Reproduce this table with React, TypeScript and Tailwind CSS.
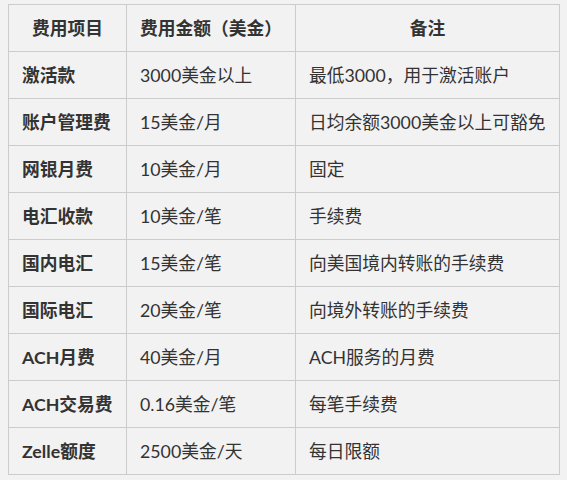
import React from 'react';

const rows = [
  ['激活款', '3000美金以上', '最低3000，用于激活账户'],
  ['账户管理费', '15美金/月', '日均余额3000美金以上可豁免'],
  ['网银月费', '10美金/月', '固定'],
  ['电汇收款', '10美金/笔', '手续费'],
  ['国内电汇', '15美金/笔', '向美国境内转账的手续费'],
  ['国际电汇', '20美金/笔', '向境外转账的手续费'],
  ['ACH月费', '40美金/月', 'ACH服务的月费'],
  ['ACH交易费', '0.16美金/笔', '每笔手续费'],
  ['Zelle额度', '2500美金/天', '每日限额'],
];

export default function App() {
  return (
    <div
      className="w-[567px] h-[480px] bg-[#f2f2f2] pt-[4px] pl-[8px] text-[#333] text-[17.75px]"
      style={{ fontFamily: 'Lato, "Noto Sans CJK SC", sans-serif' }}
    >
      <table className="border-collapse table-fixed w-[552px]">
        <colgroup>
          <col className="w-[118px]" />
          <col className="w-[169px]" />
          <col />
        </colgroup>
        <thead>
          <tr className="h-[47px]">
            <th className="border border-[#cccccc] px-[13px] text-center font-bold">费用项目</th>
            <th className="border border-[#cccccc] px-[13px] text-center font-bold">费用金额（美金）</th>
            <th className="border border-[#cccccc] px-[13px] text-center font-bold">备注</th>
          </tr>
        </thead>
        <tbody>
          {rows.map((r) => (
            <tr key={r[0]} className="h-[47px]">
              <td className="border border-[#cccccc] pl-[13px] pr-0 font-bold whitespace-nowrap">{r[0]}</td>
              <td className="border border-[#cccccc] pl-[13px] pr-0 whitespace-nowrap">{r[1]}</td>
              <td className="border border-[#cccccc] pl-[13px] pr-0 whitespace-nowrap">{r[2]}</td>
            </tr>
          ))}
        </tbody>
      </table>
    </div>
  );
}
